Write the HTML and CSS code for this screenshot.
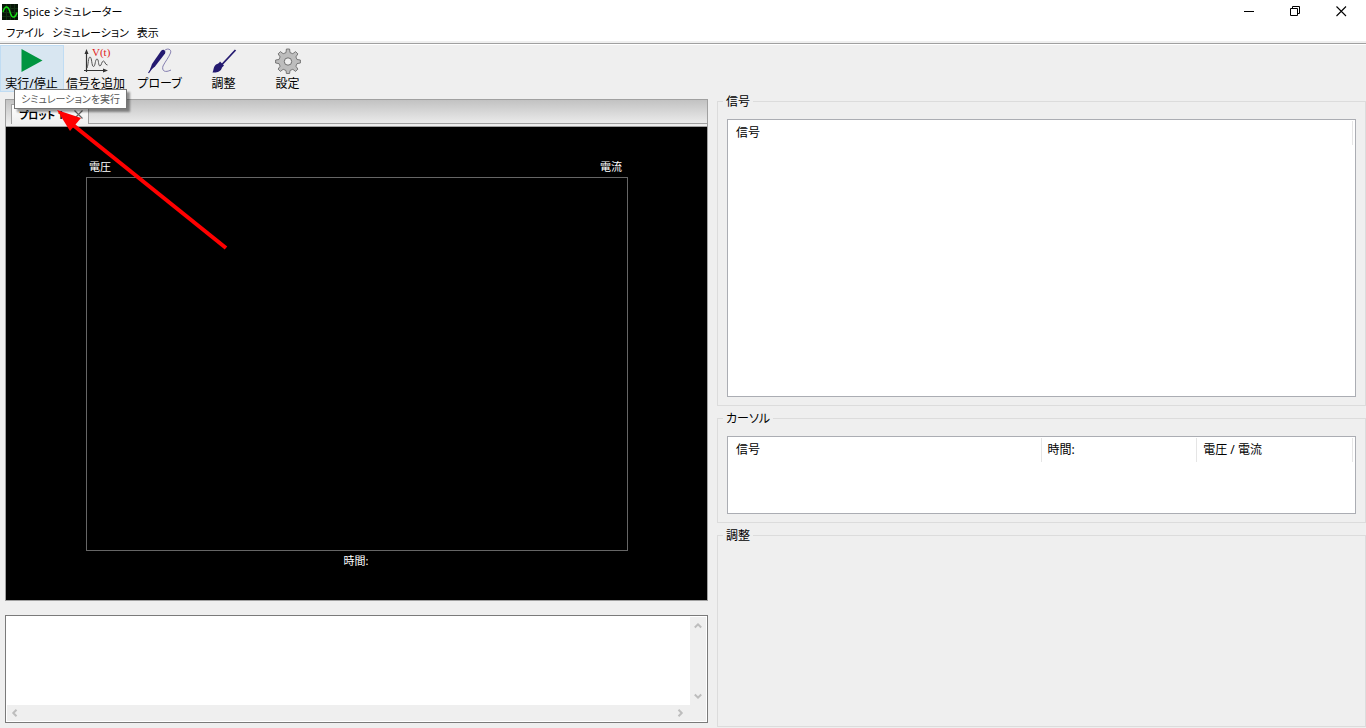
FILE: index.html
```html
<!DOCTYPE html>
<html lang="ja">
<head>
<meta charset="utf-8">
<title>Spice シミュレーター</title>
<link rel="stylesheet" href="styles.css">
</head>
<body>
<header class="titlebar">
  <svg class="app-icon" width="16" height="16" viewBox="0 0 16 16" aria-hidden="true">
    <rect width="16" height="16" fill="#071507"/>
    <path d="M0 4.500H16M0 8.500H16M0 12.500H16M4.500 0V16M8.500 0V16M12.500 0V16" stroke="#123012" stroke-width="1"/>
    <path d="M1 8C2 4.500 3 3 4.500 3C7 3 7.500 7 8.500 9.500C9.500 12.500 10.500 13.500 12 13C13.500 12.500 14.500 10.500 15 8.500" fill="none" stroke="#18e018" stroke-width="1.400"/>
  </svg>
  <h1 class="title">Spice シミュレーター</h1>
  <div class="window-controls">
    <button class="window-button" aria-label="最小化"><svg width="11" height="11" viewBox="0 0 11 11"><path d="M0 5.500H10" stroke="#000"/></svg></button>
    <button class="window-button" aria-label="元に戻す"><svg width="11" height="11" viewBox="0 0 11 11"><path d="M.5 2.500H7.500V9.500H.5ZM2.500 2.500V.5H9.500V7.500H7.500" fill="none" stroke="#000"/></svg></button>
    <button class="window-button" aria-label="閉じる"><svg width="11" height="11" viewBox="0 0 11 11"><path d="M.5 .5L10 10M10 .5L.5 10" stroke="#000" stroke-width="1.100"/></svg></button>
  </div>
</header>
<nav class="menubar">
  <button class="menu">ファイル</button>
  <button class="menu">シミュレーション</button>
  <button class="menu">表示</button>
</nav>
<div class="toolbar" role="toolbar">
  <div class="tool-wrap">
    <button class="tool tool-active" aria-describedby="run-tip">
      <svg width="26" height="26" viewBox="0 0 26 26"><path d="M2.500 1L23.500 12.500L2.500 24Z" fill="#009540"/></svg>
      <span>実行/停止</span>
    </button>
    <div class="tooltip" id="run-tip" role="tooltip">シミュレーションを実行</div>
  </div>
  <button class="tool">
    <svg width="26" height="26" viewBox="0 0 26 26"><path d="M3.500 24V4M1 22.500H21" stroke="#333" stroke-width="1.200"/><path d="M3.500 1L1.500 6H5.500ZM25 22.500L20 20.500V24.500Z" fill="#333"/><path d="M4 20C5.500 17 5 9 7 9C9 9 8.500 18.500 10.500 18.500C12.500 18.500 12 11 14 11C16 11 15 18 17 18C18.500 18 18.500 13 20.500 13C22 13 22 17 24.500 17" fill="none" stroke="#555" stroke-width="1"/><text class="icon-text" x="9" y="8">V(t)</text></svg>
    <span>信号を追加</span>
  </button>
  <button class="tool">
    <svg width="26" height="26" viewBox="0 0 26 26"><path d="M2.500 23L5 16L14 3C16 .5 19.500 2 18 5.500L8 18.500Z" fill="#241a70"/><path d="M1.500 25L7 17" stroke="#241a70" stroke-width="1.200"/><path d="M17 3C20-.5 25 1 23.500 5C22 9 18 14 16 18C14.500 23 18 25 24 22" fill="none" stroke="#7771a8" stroke-width=".9"/></svg>
    <span>プローブ</span>
  </button>
  <button class="tool">
    <svg width="26" height="26" viewBox="0 0 26 26"><path d="M24.500 2L11 16.500" stroke="#241a70" stroke-width="1.800"/><path d="M9 13.500L13 17.500L11 19.500C10 24 5 25 1.500 24.500C3 22 2 19 5 16.500C6.500 15.500 8 15.500 9 13.500Z" fill="#241a70"/></svg>
    <span>調整</span>
  </button>
  <button class="tool">
    <svg width="26" height="26" viewBox="0 0 26 26"><path d="M11.400 1H14.600L15 4.600L17.800 5.700L20.600 3.600L22.900 5.900L20.900 8.900L22 11.500L25.400 12V15L22 15.600L20.900 18.200L22.900 21.100L20.600 23.400L17.800 21.300L15 22.500L14.600 25.500H11.400L11 22.500L8.200 21.300L5.400 23.400L3.100 21.100L5.100 18.200L4 15.600L.6 15V12L4 11.500L5.100 8.900L3.100 5.900L5.400 3.600L8.200 5.700L11 4.600Z" fill="#bdbdbd" stroke="#6e6e6e" stroke-width=".9" stroke-linejoin="round"/><circle cx="13" cy="13.500" r="3.700" fill="#efefef" stroke="#6e6e6e"/></svg>
    <span>設定</span>
  </button>
</div>
<main class="workspace">
  <div class="left">
    <section class="notebook">
      <div class="tabs" role="tablist">
        <div class="tab">
          <button class="tab-name" role="tab" aria-selected="true">プロット 1</button>
          <button class="tab-close" aria-label="タブを閉じる"><svg width="9" height="9" viewBox="0 0 9 9"><path d="M.5 .5L8.500 8.500M8.500 .5L.5 8.500" stroke="#666" stroke-width="1.200"/></svg></button>
        </div>
        <div class="tab-rest"></div>
      </div>
      <div class="plot">
        <div class="plot-top"><span>電圧</span><span>電流</span></div>
        <div class="plot-area"></div>
        <div class="plot-bottom">時間:</div>
      </div>
    </section>
    <section class="log">
      <textarea class="log-text" aria-label="ログ" readonly></textarea>
      <div class="scroll-v">
        <button class="scroll" aria-label="上へ"><svg width="8" height="8" viewBox="0 0 8 8"><path d="M.8 5.500L4 2.300L7.200 5.500" /></svg></button>
        <button class="scroll" aria-label="下へ"><svg width="8" height="8" viewBox="0 0 8 8"><path d="M.8 2.500L4 5.700L7.200 2.500" /></svg></button>
      </div>
      <div class="scroll-h">
        <button class="scroll" aria-label="左へ"><svg width="8" height="8" viewBox="0 0 8 8"><path d="M5.500 .8L2.300 4L5.500 7.200" /></svg></button>
        <button class="scroll" aria-label="右へ"><svg width="8" height="8" viewBox="0 0 8 8"><path d="M2.500 .8L5.700 4L2.500 7.200" /></svg></button>
      </div>
    </section>
  </div>
  <div class="right">
    <fieldset class="group">
      <legend>信号</legend>
      <div class="list">
        <table class="columns"><thead><tr><th scope="col">信号</th></tr></thead></table>
      </div>
    </fieldset>
    <fieldset class="group">
      <legend>カーソル</legend>
      <div class="list">
        <table class="columns"><thead><tr><th scope="col" class="half">信号</th><th scope="col">時間:</th><th scope="col">電圧 / 電流</th></tr></thead></table>
      </div>
    </fieldset>
    <fieldset class="group">
      <legend>調整</legend>
    </fieldset>
  </div>
</main>
<svg class="pointer" width="180" height="145" viewBox="0 0 180 145" aria-hidden="true">
  <path d="M18 15L171 138" stroke="#f00" stroke-width="4"/>
  <path d="M2 0L26 8L15 21Z" fill="#f00"/>
</svg>
</body>
</html>
```
FILE: styles.css
```css
* {
  box-sizing: border-box;
}

body {
  margin: 0;
  height: 100vh;
  display: flex;
  flex-direction: column;
  background: #efefef;
  color: #000;
  font: 12px/18px "Noto Sans", "Noto Sans CJK JP", sans-serif;
  font-feature-settings: "palt";
  overflow: hidden;
}

button {
  margin: 0;
  padding: 0;
  border: 0;
  background: none;
  color: inherit;
  font: inherit;
  font-feature-settings: inherit;
  white-space: nowrap;
}

svg {
  display: block;
}

.titlebar {
  display: flex;
  align-items: center;
  height: 23px;
  padding-left: 2px;
  background: #fff;
}

.title {
  margin: 0 auto 0 5px;
  font-size: 11px;
  font-weight: 400;
}

.window-controls {
  display: flex;
  padding-right: 2px;
}

.window-button {
  display: flex;
  align-items: center;
  justify-content: center;
  width: 46px;
  height: 22px;
}

.menubar {
  display: flex;
  gap: 8px;
  height: 20px;
  padding-left: 6px;
  background: #fff;
  border-bottom: 2px solid #efefef;
  font-size: 11px;
}

.menu {
  height: 20px;
}

.toolbar {
  display: flex;
  height: 49px;
  border-top: 1px solid #a0a0a0;
  box-shadow: inset 0 1px #fff;
  padding-top: 1px;
}

.tool {
  display: flex;
  flex-direction: column;
  align-items: center;
  width: 64px;
  height: 47px;
  padding: 3px 1px 0 0;
}

.tool span {
  margin-top: 1px;
}

.tool-active {
  background: #d8e6f1;
  box-shadow: inset 0 0 0 1px #c0dcf3;
}

.tool-wrap {
  position: relative;
}

.icon-text {
  font: 11px "Liberation Serif", serif;
  fill: #e02020;
}

.tool svg {
  overflow: visible;
}

.tooltip {
  position: absolute;
  z-index: 2;
  left: 14px;
  top: 44px;
  padding: 0 6px;
  border: 1px solid #767676;
  background: #fff;
  color: #575757;
  font-size: 10px;
  box-shadow: 3px 3px 2px #0006;
  white-space: nowrap;
}

.workspace {
  flex: 1;
  min-height: 0;
  display: grid;
  grid-template-columns: 703fr 649fr;
  gap: 9px;
  padding-left: 5px;
}

.left {
  display: grid;
  grid-template-rows: 1fr 108px;
  gap: 14px;
  padding: 7px 0 5px;
}

.notebook {
  display: flex;
  flex-direction: column;
  border: 1px solid #a0a0a0;
}

.tabs {
  display: flex;
  height: 27px;
  padding-bottom: 2px;
  background: linear-gradient(#c2c2c2, #f0f0f0);
  border-bottom: 1px solid #a0a0a0;
}

.tab {
  display: flex;
  align-items: center;
  width: 78px;
  margin: 4px 0 0 5px;
  padding: 0 5px 0 7px;
  justify-content: space-between;
  border: 1px solid #a0a0a0;
  border-bottom: 0;
  background: linear-gradient(#fff, #efefef);
}

.tab-name {
  font-weight: 700;
  font-size: 10px;
}

.tab-rest {
  flex: 1;
  border-bottom: 1px solid #a0a0a0;
}

.plot {
  flex: 1;
  display: flex;
  flex-direction: column;
  padding: 31px 79px 30px 80px;
  background: #000;
  color: #fff;
  font-size: 11px;
}

.plot-top {
  display: flex;
  justify-content: space-between;
  height: 19px;
  padding: 0 6px 0 3px;
}

.plot-area {
  flex: 1;
  border: 1px solid #666;
}

.plot-bottom {
  height: 19px;
  padding: 1px 2px 0 0;
  text-align: center;
}

.log {
  display: grid;
  grid-template: 1fr 16px / 1fr 16px;
  padding: 1px;
  border: 1px solid #7a7a7a;
  background: #fff;
}

.log-text {
  width: 100%;
  height: 100%;
  border: 0;
  resize: none;
  outline: 0;
}

.scroll-v,
.scroll-h {
  display: flex;
  justify-content: space-between;
  background: #efefef;
}

.scroll-v {
  flex-direction: column;
}

.scroll-h {
  grid-column: 1 / 3;
  padding-right: 18px;
}

.scroll {
  display: flex;
  align-items: center;
  justify-content: center;
  width: 16px;
  height: 18px;
}

.scroll-h .scroll {
  height: 16px;
}

.scroll path {
  fill: none;
  stroke: #bdbdbd;
  stroke-width: 2;
}

.right {
  display: grid;
  grid-template-rows: 314fr 114fr 201fr;
  gap: 3px;
  padding-bottom: 1px;
}

.group {
  display: flex;
  flex-direction: column;
  min-width: 0;
  margin: 0;
  padding: 9px 9px 8px;
  border: 1px solid #dcdcdc;
}

.group legend {
  height: 18px;
  margin-left: -4px;
  padding: 1px 3px 0;
}

.list {
  flex: 1;
  padding: 1px 2px;
  background: #fff;
  border: 1px solid #abadb3;
}

.columns {
  width: 100%;
  table-layout: fixed;
  border-collapse: separate;
  border-spacing: 0;
}

.columns th {
  height: 24px;
  padding: 0 6px;
  border-right: 1px solid #e5e5e5;
  font-weight: 400;
  text-align: left;
}

.columns .half {
  width: 50%;
}

.pointer {
  position: absolute;
  z-index: 3;
  left: 55px;
  top: 110px;
}
```
